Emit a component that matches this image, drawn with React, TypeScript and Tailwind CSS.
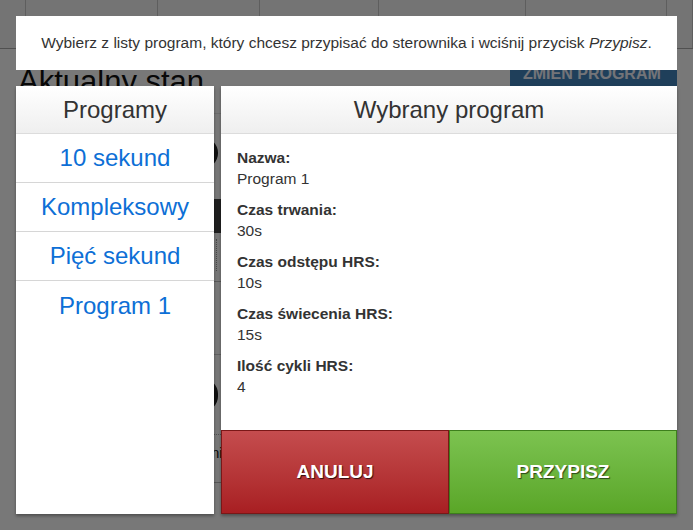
import { useState } from "react";

interface Program {
  name: string;
  duration: string;
  gap: string;
  glow: string;
  cycles: string;
}

const programs: Program[] = [
  { name: "10 sekund", duration: "10s", gap: "5s", glow: "5s", cycles: "1" },
  { name: "Kompleksowy", duration: "60s", gap: "10s", glow: "20s", cycles: "2" },
  { name: "Pięć sekund", duration: "5s", gap: "2s", glow: "3s", cycles: "1" },
  { name: "Program 1", duration: "30s", gap: "10s", glow: "15s", cycles: "4" },
];

const navCells = ["w-[26px]", "w-[132px]", "w-[102px]", "w-[119px]", "w-[147px]", "w-[141px]", "flex-1"];

function BackgroundPage() {
  return (
    <div className="h-[530px] bg-white text-[#111]">
      <nav className="flex h-[49px] border-b border-[#aaa] bg-[#f6f6f6]">
        {navCells.map((w, i) => (
          <div key={i} className={`${w} h-full border-r border-[#c8c8c8]`} />
        ))}
      </nav>
      <div className="pl-[18px] pr-4">
        <div className="flex items-start justify-between pt-[15px]">
          <h1 className="text-[31px] leading-[36px]">Aktualny stan</h1>
          <div className="-mt-[6px] h-[40px] w-[167px] bg-[#4286bf] pl-[13px] pt-[6px] text-[16px] font-bold leading-[20px] text-[#f4f6ff]">
            ZMIEŃ PROGRAM
          </div>
        </div>
        <div className="mt-[13px] border-t border-[#e6e6e6]">
          <div className="flex pt-[23px]">
            <div className="flex w-[200px] justify-end">
              <div className="h-8 w-8 rounded-full bg-[#222]" />
            </div>
          </div>
          <div className="mt-[30px] h-[34px] w-[240px] bg-[#444]" />
          <div className="ml-[198px] mt-[6px] h-[32px] border-l border-dotted border-[#999]" />
          <div className="mt-[10px] h-[73px] border-t border-[#bbb]" />
          <div className="border-t border-[#ccc] pt-[23px]">
            <div className="flex w-[200px] justify-end">
              <div className="h-[34px] w-8 rounded-full bg-[#222]" />
            </div>
            <div className="mt-[22px] border-t border-dotted border-[#aaa] pl-[150px] pt-[8px] text-[14px]">Sterownik</div>
            <div className="mt-[18px] border-b border-[#bbb]" />
          </div>
        </div>
      </div>
    </div>
  );
}

export default function App() {
  const [selected, setSelected] = useState(3);
  const current = programs[selected];

  const details = [
    { label: "Nazwa:", value: current.name },
    { label: "Czas trwania:", value: current.duration },
    { label: "Czas odstępu HRS:", value: current.gap },
    { label: "Czas świecenia HRS:", value: current.glow },
    { label: "Ilość cykli HRS:", value: current.cycles },
  ];

  return (
    <div className="relative h-[530px] w-full overflow-hidden font-['Liberation_Sans',Arial,sans-serif]">
      <BackgroundPage />
      <div className="absolute inset-0 bg-black/[0.53]" />
      <div className="absolute inset-0 flex flex-col gap-4 p-4">
        <div className="flex h-[54px] items-center justify-center bg-white text-[15.5px] text-[#333]">
          <p>
            Wybierz z listy program, który chcesz przypisać do sterownika i wciśnij przycisk <em>Przypisz</em>.
          </p>
        </div>
        <div className="flex min-h-0 flex-1 gap-[7px]">
          <div className="flex w-[198px] flex-col bg-white shadow-[0_2px_3px_rgba(0,0,0,0.35)]">
            <div className="flex h-[48px] items-center justify-center border-b border-[#dcdcdc] bg-gradient-to-b from-white to-[#efefef] text-[24px] text-[#333]">
              Programy
            </div>
            {programs.map((p, i) => (
              <button
                key={p.name}
                type="button"
                onClick={() => setSelected(i)}
                className={`flex h-[49px] items-center justify-center text-[24px] text-[#0d6fd6] ${
                  i < programs.length - 1 ? "border-b border-[#d6d6d6]" : ""
                }`}
              >
                {p.name}
              </button>
            ))}
          </div>
          <div className="flex flex-1 flex-col bg-white shadow-[0_2px_3px_rgba(0,0,0,0.35)]">
            <div className="flex h-[48px] items-center justify-center border-b border-[#dcdcdc] bg-gradient-to-b from-white to-[#efefef] text-[24px] text-[#333]">
              Wybrany program
            </div>
            <div className="flex-1 px-4 pt-[13px] text-[15.5px] leading-[21px] text-[#333]">
              {details.map((d) => (
                <div key={d.label} className="mb-[10px]">
                  <div className="font-bold">{d.label}</div>
                  <div>{d.value}</div>
                </div>
              ))}
            </div>
            <div className="flex h-[84px]">
              <button
                type="button"
                className="flex-1 border border-[#7a1717] bg-gradient-to-b from-[#c54c4e] to-[#a81e22] text-[19px] font-bold text-white [text-shadow:1px_1px_1px_rgba(0,0,0,0.75)]"
              >
                ANULUJ
              </button>
              <button
                type="button"
                className="flex-1 border border-[#3d7f1c] bg-gradient-to-b from-[#7cc350] to-[#5aa627] text-[19px] font-bold text-white [text-shadow:1px_1px_1px_rgba(0,0,0,0.6)]"
              >
                PRZYPISZ
              </button>
            </div>
          </div>
        </div>
      </div>
    </div>
  );
}
